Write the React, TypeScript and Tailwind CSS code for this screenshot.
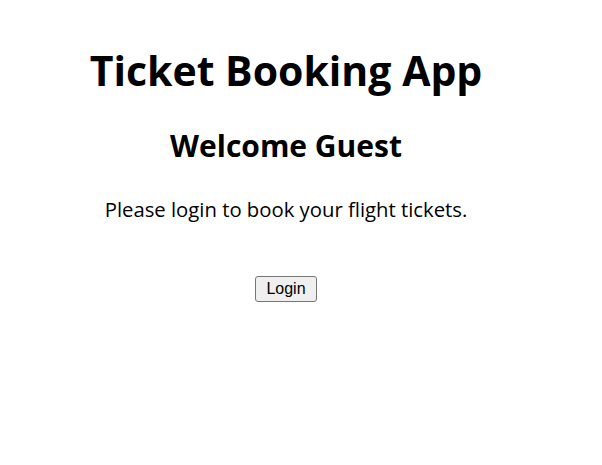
export default function App() {
  return (
    <div className="flex w-[572px] flex-col items-center bg-white text-center text-black font-['Open_Sans',sans-serif]">
      <h1 className="mt-[50px] text-[41px] font-bold leading-none">Ticket Booking App</h1>
      <h2 className="mt-[40px] text-[30px] font-bold leading-none">Welcome Guest</h2>
      <p className="mt-[38px] text-[20.3px] leading-none">Please login to book your flight tickets.</p>
      <button
        type="button"
        className="mt-[57px] rounded-[3px] border border-[#767676] bg-[#efefef] px-[10px] py-[2px] text-[16px] leading-[20px] text-black font-['Liberation_Sans',Arial,sans-serif]"
      >
        Login
      </button>
    </div>
  );
}
